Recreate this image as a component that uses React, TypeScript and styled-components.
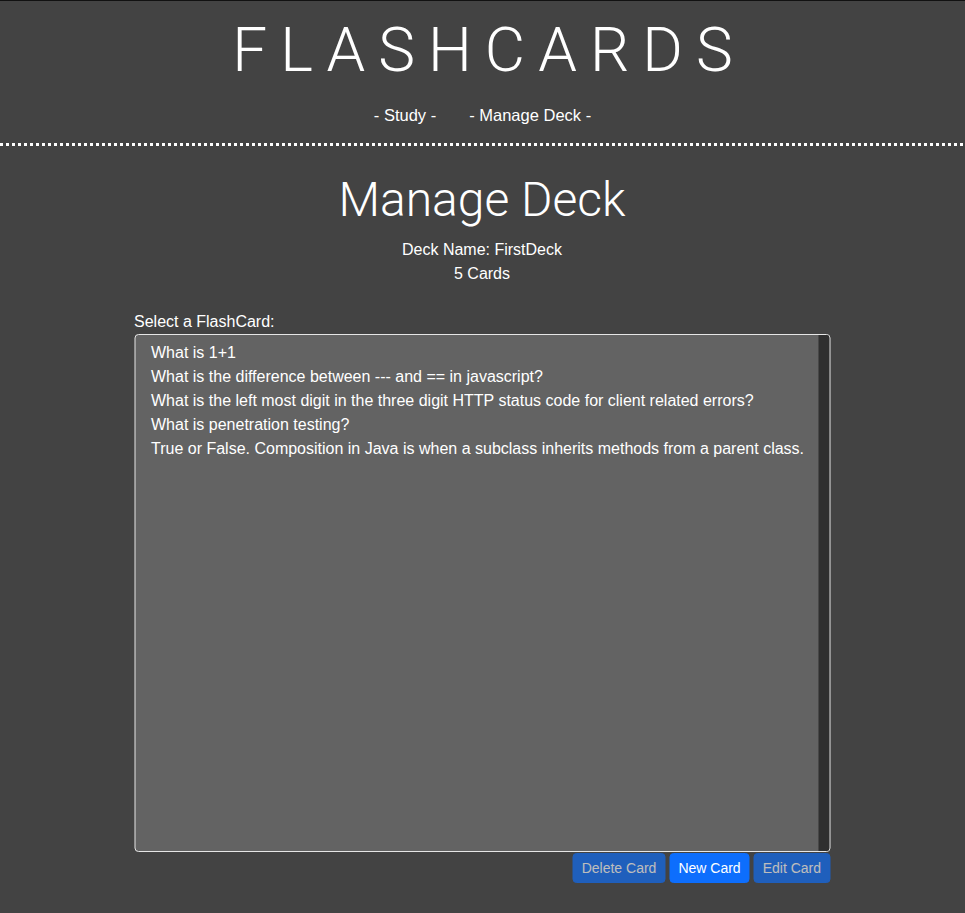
import React from 'react'
import styled, { createGlobalStyle } from 'styled-components'

const cards: string[] = [
	'What is 1+1',
	'What is the difference between --- and == in javascript?',
	'What is the left most digit in the three digit HTTP status code for client related errors?',
	'What is penetration testing?',
	'True or False. Composition in Java is when a subclass inherits methods from a parent class.',
]

export default function App() {
	return (
		<>
			<GlobalStyle />
			<Page>
				<Header>
					<Title>FLASHCARDS</Title>
					<Nav>
						<NavLink>- Study -</NavLink>
						<NavLink>- Manage Deck -</NavLink>
					</Nav>
				</Header>
				<Divider />
				<Container>
					<Heading>Manage Deck</Heading>
					<Info>Deck Name: FirstDeck</Info>
					<Info>5 Cards</Info>
					<Label>Select a FlashCard:</Label>
					<ListBox>
						<Options>
							{cards.map(card => (
								<Option key={card}>{card}</Option>
							))}
						</Options>
						<ScrollTrack />
					</ListBox>
					<Actions>
						<Button disabled>Delete Card</Button>
						<Button>New Card</Button>
						<Button disabled>Edit Card</Button>
					</Actions>
				</Container>
			</Page>
		</>
	)
}

const GlobalStyle = createGlobalStyle`
	html, body {
		margin: 0;
		background: #434343;
		color: #fff;
		font-family: 'Liberation Sans', Arial, sans-serif;
		font-size: 16px;
	}
`

const Page = styled.div`
	min-height: 913px;
	border-top: 1px solid #111;
	box-sizing: border-box;
`

const Header = styled.header`
	display: flex;
	flex-direction: column;
	align-items: center;
	padding-top: 13px;
`

const Title = styled.h1`
	margin: 0;
	font-family: Roboto, 'Liberation Sans', sans-serif;
	font-weight: 300;
	font-size: 62px;
	line-height: 72px;
	letter-spacing: 13px;
	padding-left: 13px;
`

const Nav = styled.nav`
	display: flex;
	gap: 33px;
	margin-top: 17px;
	line-height: 24px;
	font-size: 16.5px;
`

const NavLink = styled.span`
	color: #fff;
	cursor: pointer;
`

const Divider = styled.div`
	height: 3px;
	margin-top: 16px;
	background: repeating-linear-gradient(
		to right,
		#fff 0,
		#fff 3px,
		transparent 3px,
		transparent 6px
	);
`

const Container = styled.main`
	width: 696px;
	margin: 0 auto;
	display: flex;
	flex-direction: column;
	transform: translateX(-0.5px);
`

const Heading = styled.h2`
	margin: 25px 0 9px;
	text-align: center;
	font-family: Roboto, 'Liberation Sans', sans-serif;
	font-weight: 300;
	font-size: 48px;
	line-height: 58px;
`

const Info = styled.div`
	text-align: center;
	line-height: 24px;
`

const Label = styled.label`
	margin-top: 24px;
	line-height: 24px;
`

const ListBox = styled.div`
	display: flex;
	height: 518px;
	border: 1px solid #e6e6e6;
	border-radius: 4px;
	background: #636363;
	overflow: hidden;
	box-sizing: border-box;
`

const Options = styled.div`
	flex: 1;
	padding: 6px 0 6px 12px;
`

const Option = styled.div`
	padding: 0 4px;
	line-height: 24px;
	white-space: nowrap;
`

const ScrollTrack = styled.div`
	width: 11px;
	background: #2f2f2f;
`

const Actions = styled.div`
	display: flex;
	justify-content: flex-end;
	gap: 4px;
	margin-top: 1px;
`

const Button = styled.button`
	font-family: 'Liberation Sans', Arial, sans-serif;
	font-size: 14px;
	line-height: 20px;
	padding: 4px 8px;
	border: 1px solid #0d6efd;
	border-radius: 4px;
	background: #0d6efd;
	color: #fff;
	cursor: pointer;

	&:disabled {
		opacity: 0.65;
		cursor: default;
	}
`
